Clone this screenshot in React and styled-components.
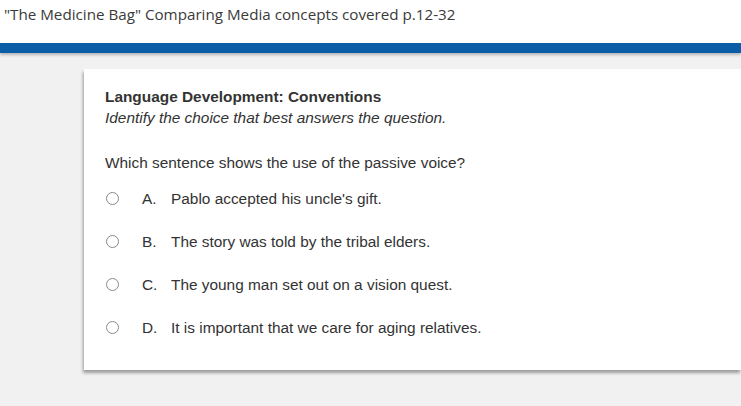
import React from "react";
import styled, { createGlobalStyle } from "styled-components";

const Global = createGlobalStyle`
  html, body { margin: 0; padding: 0; }
  body {
    background: #f1f1f1;
    font-family: "Liberation Sans", Arial, sans-serif;
    overflow: hidden;
  }
`;

const Page = styled.div`
  width: 741px;
  height: 406px;
  display: flex;
  flex-direction: column;
  overflow: hidden;
`;

const Header = styled.header`
  height: 43px;
  background: #ffffff;
  display: flex;
  align-items: flex-start;
  padding-left: 4px;
  box-sizing: border-box;
`;

const Title = styled.h1`
  margin: 3px 0 0;
  font-family: "Open Sans", sans-serif;
  font-weight: 400;
  font-size: 15.2px;
  line-height: 22px;
  color: #3a3a3a;
`;

const BlueBar = styled.div`
  height: 10px;
  background: #0a5da6;
  box-shadow: 0 2px 3px rgba(0, 0, 0, 0.25);
  position: relative;
  z-index: 1;
`;

const Main = styled.main`
  flex: 1;
  padding: 16px 0 0 84px;
`;

const Card = styled.section`
  background: #ffffff;
  height: 301px;
  padding: 17px 0 0 21px;
  box-sizing: border-box;
  box-shadow: -1px 3px 3px rgba(0, 0, 0, 0.35);
  color: #333333;
`;

const Heading = styled.h2`
  margin: 0;
  font-size: 15.4px;
  font-weight: 700;
  line-height: 21px;
  color: #333333;
`;

const Instruction = styled.p`
  margin: 0;
  font-size: 15.4px;
  font-style: italic;
  line-height: 21px;
`;

const Question = styled.p`
  margin: 24px 0 0;
  font-size: 15.4px;
  line-height: 21px;
`;

const Options = styled.ul`
  list-style: none;
  margin: 15px 0 0;
  padding: 0;
  display: flex;
  flex-direction: column;
  gap: 22px;
`;

const Option = styled.li`
  display: flex;
  align-items: center;
  font-size: 15.4px;
  line-height: 21px;
  height: 21px;
`;

const Radio = styled.span`
  width: 11px;
  height: 11px;
  border: 1px solid #8a8a8a;
  border-radius: 50%;
  box-sizing: content-box;
  margin-left: 1px;
  flex: none;
`;

const Letter = styled.span`
  width: 29px;
  margin-left: 23px;
  flex: none;
`;

const Text = styled.span``;

const options = [
  ["A.", "Pablo accepted his uncle's gift."],
  ["B.", "The story was told by the tribal elders."],
  ["C.", "The young man set out on a vision quest."],
  ["D.", "It is important that we care for aging relatives."],
];

export default function App() {
  return (
    <Page>
      <Global />
      <Header>
        <Title>"The Medicine Bag" Comparing Media concepts covered p.12-32</Title>
      </Header>
      <BlueBar />
      <Main>
        <Card>
          <Heading>Language Development: Conventions</Heading>
          <Instruction>Identify the choice that best answers the question.</Instruction>
          <Question>Which sentence shows the use of the passive voice?</Question>
          <Options>
            {options.map(([l, t]) => (
              <Option key={l}>
                <Radio />
                <Letter>{l}</Letter>
                <Text>{t}</Text>
              </Option>
            ))}
          </Options>
        </Card>
      </Main>
    </Page>
  );
}
